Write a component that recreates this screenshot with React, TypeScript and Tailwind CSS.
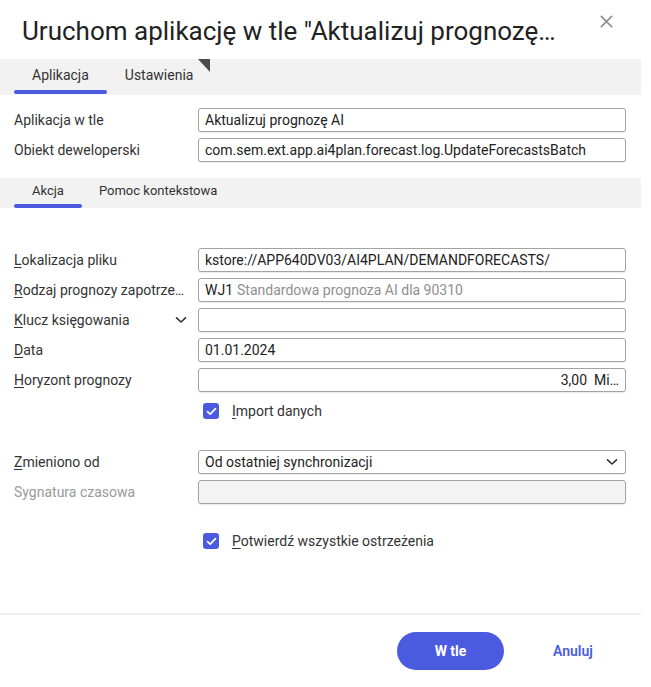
import React from "react";

function Chevron({ className = "" }: { className?: string }) {
  return (
    <svg width="12" height="8" viewBox="0 0 12 8" className={className} fill="none">
      <path d="M1.5 1.8 L6 6 L10.5 1.8" stroke="#333" strokeWidth="1.6" strokeLinecap="round" strokeLinejoin="round" />
    </svg>
  );
}

function Check() {
  return (
    <div className="w-4 h-4 rounded-[3px] bg-[#4a5be0] flex items-center justify-center">
      <svg width="11" height="9" viewBox="0 0 11 9" fill="none">
        <path d="M1.5 4.6 L4.2 7.2 L9.5 1.6" stroke="#fff" strokeWidth="1.7" strokeLinecap="round" strokeLinejoin="round" />
      </svg>
    </div>
  );
}

function Label({ first, rest, muted = false }: { first: string; rest: string; muted?: boolean }) {
  return (
    <div className={`whitespace-nowrap text-[14px] ${muted ? "text-[#9a9a9a]" : "text-[#333]"}`}>
      {first ? <span className="underline underline-offset-2">{first}</span> : null}
      {rest}
    </div>
  );
}

function Input({ children, disabled = false, right = false }: { children?: React.ReactNode; disabled?: boolean; right?: boolean }) {
  return (
    <div
      className={`h-6 w-[428px] rounded-[3px] border border-[#a3a3a3] px-[6px] flex items-center text-[14px] text-[#222] shadow-[0_1px_1px_rgba(0,0,0,0.08)] ${
        disabled ? "bg-[#f3f3f3]" : "bg-white"
      } ${right ? "justify-end" : ""}`}
    >
      {children}
    </div>
  );
}

function Row({ label, children }: { label: React.ReactNode; children: React.ReactNode }) {
  return (
    <div className="flex items-center h-6 pl-[14px]">
      <div className="w-[184px] pr-3 flex items-center">{label}</div>
      {children}
    </div>
  );
}

export default function App() {
  return (
    <div className="w-[651px] h-[687px] bg-white font-[Roboto,sans-serif] relative overflow-hidden">
      {/* Title */}
      <div className="h-[59px] flex items-center pl-[22px] pr-[37px] justify-between">
        <div className="text-[26px] text-[#222] leading-none pt-[2px] whitespace-nowrap">
          Uruchom aplikację w tle "Aktualizuj prognozę…
        </div>
        <svg width="15" height="15" viewBox="0 0 16 16" className="self-start mt-[14px]">
          <path d="M2 2 L14 14 M14 2 L2 14" stroke="#8a8a8a" strokeWidth="1.6" />
        </svg>
      </div>

      {/* Tab bar 1 */}
      <div className="w-[641px] h-9 bg-[#f2f2f2] flex pl-[14px] text-[14px] text-[#333]">
        <div className="relative px-[18px] flex items-center pb-[3px]">
          Aplikacja
          <div className="absolute left-0 right-0 bottom-[1px] h-[4px] rounded-full bg-[#4a5be0]" />
        </div>
        <div className="relative px-[18px] flex items-center pb-[3px]">
          Ustawienia
          <svg width="12" height="13" viewBox="0 0 12 13" className="absolute right-[1px] top-0">
            <path d="M0 0 H12 V13 Z" fill="#4a4a4a" />
          </svg>
        </div>
      </div>

      {/* Rows group 1 */}
      <div className="pt-[13px] flex flex-col gap-[6px]">
        <Row label={<Label first="" rest="Aplikacja w tle" />}>
          <Input>Aktualizuj prognozę AI</Input>
        </Row>
        <Row label={<Label first="" rest="Obiekt deweloperski" />}>
          <Input>com.sem.ext.app.ai4plan.forecast.log.UpdateForecastsBatch</Input>
        </Row>
      </div>

      {/* Tab bar 2 */}
      <div className="mt-[16px] w-[641px] h-[30px] bg-[#f2f2f2] flex pl-[14px] text-[13px] text-[#333]">
        <div className="relative px-[18px] flex items-center pb-[4px]">
          Akcja
          <div className="absolute left-0 right-0 bottom-0 h-[4px] rounded-full bg-[#4a5be0]" />
        </div>
        <div className="relative px-[17px] flex items-center pb-[4px]">Pomoc kontekstowa</div>
      </div>

      {/* Rows group 2 */}
      <div className="pt-[40px] flex flex-col gap-[6px]">
        <Row label={<Label first="L" rest="okalizacja pliku" />}>
          <Input>kstore://APP640DV03/AI4PLAN/DEMANDFORECASTS/</Input>
        </Row>
        <Row label={<Label first="R" rest="odzaj prognozy zapotrze…" />}>
          <Input>
            <span>WJ1</span>
            <span className="ml-[4px] text-[#8f8f8f]">Standardowa prognoza AI dla 90310</span>
          </Input>
        </Row>
        <Row
          label={
            <div className="flex items-center justify-between w-full">
              <Label first="K" rest="lucz księgowania" />
              <Chevron className="mr-[-1px]" />
            </div>
          }
        >
          <Input />
        </Row>
        <Row label={<Label first="D" rest="ata" />}>
          <Input>01.01.2024</Input>
        </Row>
        <Row label={<Label first="H" rest="oryzont prognozy" />}>
          <Input right>3,00&nbsp;&nbsp;Mi…</Input>
        </Row>
      </div>

      {/* Checkbox 1 */}
      <div className="mt-[11px] h-4 flex items-center pl-[203px] gap-[13px]">
        <Check />
        <Label first="I" rest="mport danych" />
      </div>

      {/* Rows group 3 */}
      <div className="pt-[31px] flex flex-col gap-[6px]">
        <Row label={<Label first="Z" rest="mieniono od" />}>
          <div className="h-6 w-[428px] rounded-[3px] border border-[#a3a3a3] pl-[6px] pr-[7px] flex items-center justify-between text-[14px] text-[#222] shadow-[0_1px_1px_rgba(0,0,0,0.08)] bg-white">
            <span>Od ostatniej synchronizacji</span>
            <Chevron />
          </div>
        </Row>
        <Row label={<Label first="" rest="Sygnatura czasowa" muted />}>
          <Input disabled />
        </Row>
      </div>

      {/* Checkbox 2 */}
      <div className="mt-[29px] h-4 flex items-center pl-[203px] gap-[13px]">
        <Check />
        <Label first="P" rest="otwierdź wszystkie ostrzeżenia" />
      </div>

      {/* Separator */}
      <div className="mt-[64px] w-[641px] h-[2px] bg-[#f0f0f0]" />

      {/* Footer */}
      <div className="pt-[17px] flex items-center pl-[397px]">
        <button className="w-[107px] h-[38px] rounded-full bg-[#4a5be0] text-white text-[14px] font-bold">
          W tle
        </button>
        <button className="ml-[49px] text-[14px] font-semibold text-[#4a5be0]">Anuluj</button>
      </div>
    </div>
  );
}
